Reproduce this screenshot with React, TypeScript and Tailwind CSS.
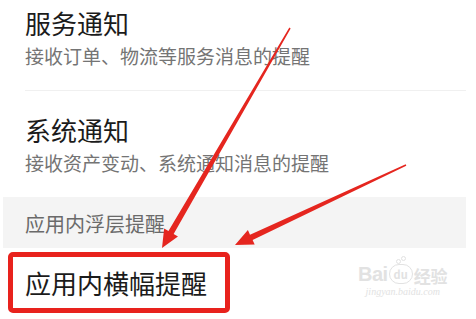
import React from "react";

function Arrows() {
  return (
    <svg className="absolute inset-0 pointer-events-none" width={476} height={319} viewBox="0 0 476 319">
      <polygon
        fill="#e5261f"
        points="290.65,28.38 289.35,27.62 168.46,230.94 164.14,228.43 162,248 177.96,236.47 173.64,233.96"
      />
      <polygon
        fill="#e5261f"
        points="406.3,165.7 405.7,164.3 250.0,234.7 247.9,230.1 235,245 254.7,244.6 252.6,240.1"
      />
    </svg>
  );
}

function Watermark() {
  return (
    <div className="absolute left-[358px] top-[264px] flex flex-col items-center text-[#e2e2e2] select-none">
      <div className="flex items-end leading-none">
        <span className="text-[20px] font-bold tracking-tight" style={{ fontFamily: "'Liberation Sans', sans-serif" }}>
          Bai
        </span>
        <span className="relative mx-[1px] flex h-[20px] w-[24px] items-center justify-center rounded-full border border-[#e2e2e2] text-[11px] font-bold">
          du
          <span className="absolute -top-[6px] left-[6px] h-[5px] w-[5px] rounded-full border border-[#e2e2e2]" />
          <span className="absolute -top-[9px] left-[11px] h-[5px] w-[5px] rounded-full border border-[#e2e2e2]" />
        </span>
        <span className="text-[17px] font-bold">经验</span>
      </div>
      <div className="mt-[3px] text-[10px] italic leading-none" style={{ fontFamily: "'Liberation Serif', serif" }}>
        jingyan.baidu.com
      </div>
    </div>
  );
}

export default function App() {
  return (
    <div
      className="relative w-[476px] h-[319px] overflow-hidden bg-white"
      style={{ fontFamily: "'Noto Sans CJK SC', 'Noto Sans', sans-serif" }}
    >
      <div className="ml-[3px] w-[463px]">
        {/* 服务通知 */}
        <div className="pl-[22px] pt-[9px]">
          <div className="text-[26px] leading-[28px] text-[#1b1b1b]">服务通知</div>
          <div className="mt-[9px] text-[19px] leading-[20px] text-[#747474]">接收订单、物流等服务消息的提醒</div>
        </div>
        <div className="ml-[22px] mt-[24px] h-px bg-[#f0f0f0]" />

        {/* 系统通知 */}
        <div className="pl-[22px] pt-[25px]">
          <div className="text-[26px] leading-[28px] text-[#1b1b1b]">系统通知</div>
          <div className="mt-[9px] text-[19px] leading-[20px] text-[#747474]">接收资产变动、系统通知消息的提醒</div>
        </div>

        {/* 应用内浮层提醒 */}
        <div className="mt-[24px] h-[51px] bg-[#f4f4f4] pl-[22px] pt-[17px]">
          <div className="text-[20px] leading-[20px] text-[#6a6a6a]">应用内浮层提醒</div>
        </div>

        {/* 应用内横幅提醒 */}
        <div className="mt-[4px] ml-[5px] flex h-[61px] w-[222px] items-center rounded-[5px] border-[5px] border-[#e8221d] pl-[12px]">
          <div className="text-[26px] leading-[28px] text-[#1b1b1b]">应用内横幅提醒</div>
        </div>
      </div>
      <Watermark />
      <Arrows />
    </div>
  );
}
